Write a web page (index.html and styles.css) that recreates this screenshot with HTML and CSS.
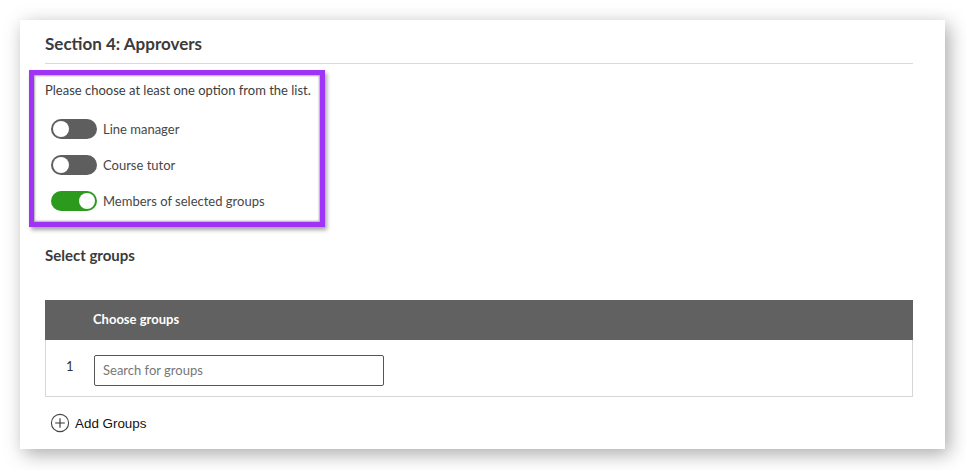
FILE: index.html
```html
<!DOCTYPE html>
<html>
<head>
<meta charset="utf-8">
<link rel="stylesheet" href="styles.css">
</head>
<body>
<div class="card">
  <h2 class="section-title">Section 4: Approvers</h2>
  <div class="highlight">
    <p class="hint">Please choose at least one option from the list.</p>
    <div class="options">
      <label class="option"><span class="toggle"><span class="knob"></span></span><span class="opt-label">Line manager</span></label>
      <label class="option"><span class="toggle"><span class="knob"></span></span><span class="opt-label">Course tutor</span></label>
      <label class="option"><span class="toggle on"><span class="knob"></span></span><span class="opt-label">Members of selected groups</span></label>
    </div>
  </div>
  <h3 class="sub-title">Select groups</h3>
  <div class="table">
    <div class="thead"><span class="th">Choose groups</span></div>
    <div class="row">
      <span class="num">1</span>
      <div class="search">Search for groups</div>
    </div>
  </div>
  <div class="add">
    <svg class="add-icon" width="20" height="20" viewBox="0 0 20 20"><circle cx="10" cy="10" r="8.6" fill="none" stroke="#444" stroke-width="1.1"/><path d="M10 5.2v9.6M5.2 10h9.6" stroke="#333" stroke-width="1.1"/></svg>
    <span class="add-label">Add Groups</span>
  </div>
</div>
</body>
</html>
```
FILE: styles.css
```css
html, body { margin: 0; padding: 0; background: #ffffff; }
body { font-family: Lato, "Open Sans", sans-serif; width: 966px; height: 470px; overflow: hidden; }
.card {
  margin: 20px 0 0 20px;
  width: 925px;
  height: 429px;
  box-sizing: border-box;
  background: #fff;
  padding: 14px 32px 0 25px;
  box-shadow: 4px 5px 18px rgba(0,0,0,0.34);
}
.section-title {
  margin: 0;
  font-size: 17px;
  line-height: 20px;
  font-weight: 700;
  color: #3b3b3b;
  padding-bottom: 9px;
  border-bottom: 1px solid #d9d9d9;
}
.highlight {
  margin: 6px 0 0 -16px;
  width: 296px;
  box-sizing: border-box;
  border: 5px solid #a034f6;
  padding: 6px 0 11px 11px;
  box-shadow: inset 0 0 2px 1px rgba(0,0,0,0.35), 2px 3px 4px rgba(0,0,0,0.35);
}
.hint {
  margin: 0;
  font-size: 13px;
  line-height: 18px;
  color: #3d3d3d;
}
.options { display: flex; flex-direction: column; gap: 16px; margin-top: 20px; padding-left: 6px; }
.option { display: flex; align-items: center; gap: 6px; height: 20px; }
.toggle {
  width: 46px; height: 20px; border-radius: 10px;
  background: #5e5e5e;
  display: flex; align-items: center; padding: 0 2px; box-sizing: border-box;
}
.toggle.on { background: #2c9b1d; justify-content: flex-end; }
.knob { width: 16px; height: 16px; border-radius: 50%; background: #fff; }
.opt-label { font-size: 13px; color: #474747; line-height: 18px; }
.sub-title {
  margin: 18px 0 0 0;
  font-size: 15px;
  line-height: 20px;
  font-weight: 700;
  color: #3b3b3b;
}
.table { margin-top: 35px; }
.thead {
  height: 40px; background: #616161;
  display: flex; align-items: center; padding-left: 48px;
}
.th { color: #fff; font-weight: 700; font-size: 13px; line-height: 16px; margin-top: -2px; }
.row {
  height: 57px; box-sizing: border-box;
  border: 1px solid #d6d6d6; border-top: none;
  display: flex; align-items: flex-start; padding: 15px 0 0 21px;
}
.num { font-size: 13px; color: #333; width: 28px; line-height: 23px; margin-left: -1px; }
.search {
  width: 290px; height: 31px; box-sizing: border-box;
  border: 1px solid #555; border-radius: 2px;
  font-size: 13px; color: #777; line-height: 28px; padding-left: 8px;
}
.add { display: flex; align-items: center; gap: 5px; margin-top: 16px; padding-left: 5px; }
.add-icon { display: block; }
.add-label { font-family: "Liberation Sans", Arial, sans-serif; font-size: 13.4px; color: #111; }
```
